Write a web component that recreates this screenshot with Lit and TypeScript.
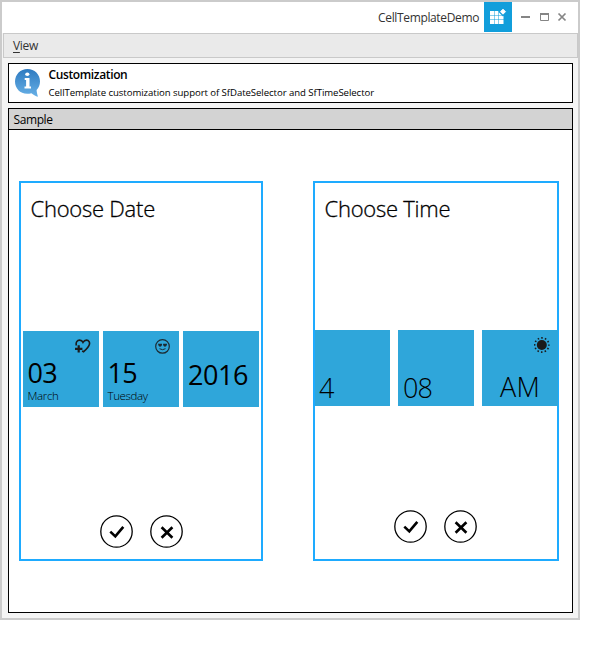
import { LitElement, html, css, svg, nothing } from "lit";
import { customElement, property } from "lit/decorators.js";

const heart = svg`
  <path d="M1.4 7.5C.5 4.5 2.2 2.100 4.6 2.100 6.300 2.100 7.400 3 8 4.300 8.800 2.900 9.900 2.100 11.500 2.100c2.400 0 3.600 2.300 2.800 4.600-.9 2.700-3.300 4.800-5.700 7l-1.500-.6" fill="none" stroke="#1b1b1b" stroke-width="1.6"/>
  <path d="M3.7 7.3v7.2M0 10.900h7.400" stroke="#1b1b1b" stroke-width="2.2"/>`;

const face = svg`
  <circle cx="7.5" cy="8.4" r="6.8" fill="none" stroke="#1c2b33" stroke-width="1.2"/>
  <path d="M3 5.800h4v1.100q-.5 1.800-1.900 1.800T3.300 6.900zM8.100 5.800h4l-.3 1.100q-.4 1.800-1.800 1.800T8.100 6.900z" fill="#1c2b33"/>
  <path d="M4.500 10.700q3 2 6 0" fill="none" stroke="#1c2b33" stroke-width="1"/>`;

const sun = svg`
  <circle cx="7.8" cy="8" r="5" fill="#1b1b1b"/>
  <circle cx="7.8" cy="8" r="7.1" fill="none" stroke="#1b1b1b" stroke-width="1.6" stroke-dasharray="1.6 2.117" stroke-dashoffset=".8"/>`;

const glyphs: Record<string, unknown> = { heart, face, sun };

interface Cell {
  value: string;
  label?: string;
  glyph?: string;
  kind: string;
}

@customElement("selector-panel")
class SelectorPanel extends LitElement {
  @property() heading = "";
  @property() variant = "date";
  @property({ attribute: false }) cells: Cell[] = [];

  static styles = css`
    :host { display: block; }
    .panel { box-sizing: border-box; height: 380px; border: 2px solid #1eabff; display: flex; flex-direction: column; }
    .date { width: 244px; }
    .time { width: 246px; }
    .heading { height: 148px; box-sizing: border-box; padding: 10px 0 0 9.5px; font: 300 22px/30px "Open Sans", "Noto Sans", sans-serif; letter-spacing: -.24px; color: #000; white-space: nowrap; -webkit-text-stroke: .3px #000; }
    .time .heading { height: 147px; }
    .cells { display: flex; gap: 4px; padding: 0 2px; height: 76px; }
    .time .cells { gap: 8px; padding: 0; }
    .cell { position: relative; box-sizing: border-box; flex: none; width: 76px; height: 76px; background: #2fa6da; white-space: nowrap; display: flex; flex-direction: column; }
    .time .cell:first-child { width: 75px; }
    .glyph { position: absolute; top: 7px; right: 8px; width: 16px; height: 16px; }
    .value { font: 400 27px/30px "Open Sans", "Noto Sans", sans-serif; color: #000; }
    .day .value { padding: 32px 0 0 4.5px; line-height: 20px; letter-spacing: -.6px; }
    .label { font: 300 11.5px/12px "Open Sans", "Noto Sans", sans-serif; padding: 7px 0 0 4.5px; color: #000; letter-spacing: -.35px; }
    .year .value { padding: 29px 0 0 5px; letter-spacing: -.4px; }
    .clock .value { padding: 43px 0 0 4px; font-weight: 300; letter-spacing: -1px; }
    .clock + .clock .value { padding-left: 5px; }
    .meridiem .value { padding: 42px 0 0 18px; font-weight: 300; letter-spacing: .3px; }
    .actions { display: flex; gap: 17px; padding: 108px 0 0 79px; }
    .time .actions { padding-top: 104px; }
    .actions svg { width: 33px; height: 33px; }
  `;

  render() {
    return html`
      <div class="panel ${this.variant}">
        <div class="heading">${this.heading}</div>
        <div class="cells">
          ${this.cells.map((c) => html`
            <div class="cell ${c.kind}">
              ${c.glyph ? html`<svg class="glyph" viewBox="0 0 16 16">${glyphs[c.glyph]}</svg>` : nothing}
              <div class="value">${c.value}</div>
              ${c.label ? html`<div class="label">${c.label}</div>` : nothing}
            </div>`)}
        </div>
        <div class="actions">
          <svg viewBox="0 0 33 33" fill="none" stroke="#000">
            <circle cx="16.5" cy="16.5" r="15.7" stroke-width="1.3" />
            <path d="M10.300 16.600l5 4.800 8-9.600" stroke-width="2.6" />
          </svg>
          <svg viewBox="0 0 33 33" fill="none" stroke="#000">
            <circle cx="16.5" cy="16.5" r="15.7" stroke-width="1.3" />
            <path d="M11.600 12.200l10.800 10.600M22.400 12.200l-10.800 10.600" stroke-width="2.6" />
          </svg>
        </div>
      </div>`;
  }
}

@customElement("app-root")
class AppRoot extends LitElement {
  static styles = css`
    :host { display: block; width: 591px; height: 650px; background: #fff; font-family: "Open Sans", "Noto Sans", sans-serif; color: #000; overflow: hidden; }
    .window { box-sizing: border-box; width: 580px; height: 620px; border: 2px solid #cbcbcb; background: #f4f4f4; display: flex; flex-direction: column; }
    .title { height: 31px; background: #fff; display: flex; justify-content: flex-end; white-space: nowrap; }
    .name { font-size: 12px; line-height: 32px; color: #333; letter-spacing: -.36px; margin-right: 5px; }
    .logo { width: 28px; height: 30px; background: #119edb; }
    .controls { width: 66px; height: 30px; }
    .menu { box-sizing: border-box; height: 25px; margin: 0 0 0 1px; border: 1px solid #c9c9c9; background: #eaeaea; padding-left: 9px; font-size: 12px; line-height: 24px; color: #333; letter-spacing: -.3px; }
    .key { text-decoration: underline; text-underline-offset: 2px; }
    .info { box-sizing: border-box; height: 40px; margin: 5px 5px 0 6px; border: 1px solid #000; background: #fff; display: flex; }
    .bubble { width: 30px; height: 36px; margin-left: 4px; flex: none; }
    .copy { padding: 2px 0 0 5.5px; white-space: nowrap; }
    .strong { font-size: 12px; line-height: 17px; font-weight: 600; letter-spacing: -.37px; }
    .detail { font-size: 9.6px; line-height: 14px; padding-top: 3px; letter-spacing: -.06px; }
    .sample { box-sizing: border-box; height: 505px; margin: 5px 5px 0 6px; border: 1px solid #000; background: #fff; }
    .caption { height: 20px; background: #d3d3d3; border-bottom: 1px solid #000; padding-left: 4.5px; font-size: 12px; line-height: 21px; letter-spacing: -.4px; }
    .panels { display: flex; gap: 50px; padding: 51px 0 0 10px; }
  `;

  private dateCells: Cell[] = [
    { value: "03", label: "March", glyph: "heart", kind: "day" },
    { value: "15", label: "Tuesday", glyph: "face", kind: "day" },
    { value: "2016", kind: "year" },
  ];

  private timeCells: Cell[] = [
    { value: "4", kind: "clock" },
    { value: "08", kind: "clock" },
    { value: "AM", glyph: "sun", kind: "meridiem" },
  ];

  render() {
    return html`
      <div class="window">
        <div class="title">
          <span class="name">CellTemplateDemo</span>
          <svg class="logo" viewBox="0 0 28 30">
            <path d="M6 9h4v4H6zM10.500 9h4v4h-4zM15 9h4.500v4H15zM6 13.500h4v4H6zM10.500 13.500h4v4h-4zM15 13.500h4.500v4H15zM6 18h4v4H6zM10.500 18h4v4h-4zM15 18h4.500v4H15z" fill="#fff" />
            <path d="M19 5l4.700 4.700-4.700 4.700-4.700-4.700z" fill="#119edb" />
            <path d="M19 7.200l2.500 2.500-2.500 2.500-2.500-2.500z" fill="#fff" stroke="#fff" stroke-linejoin="round" />
          </svg>
          <svg class="controls" viewBox="0 0 66 30" fill="none" stroke="#858585">
            <path d="M9 15h9" stroke-width="2" />
            <path d="M28.500 12h8v6.500h-8z" /><path d="M28 12h9" stroke-width="2" />
            <path d="M46.500 11.500l7 7M53.500 11.500l-7 7" stroke-width="1.7" />
          </svg>
        </div>
        <div class="menu"><span class="key">V</span>iew</div>
        <div class="info">
          <svg class="bubble" viewBox="0 0 30 36">
            <defs>
              <linearGradient id="blue" x2="0" y2="1">
                <stop offset="0" stop-color="#2e7ac0" /><stop offset="1" stop-color="#67b0e6" />
              </linearGradient>
            </defs>
            <path d="M14.500 5C21.500 5 27 10.300 27 17.500c0 3.400-1.300 6.300-3.400 8.400.1 1.800.5 4 1.400 6.800-2.500-.6-4.900-2-6.600-3.500C9 31.800 2 25.500 2 17.500 2 10.300 7.500 5 14.500 5z" fill="url(#blue)" />
            <ellipse cx="14.3" cy="10.3" rx="2.1" ry="1.8" fill="#fff" />
            <path d="M11.700 14h4.800v8.400H18v2h-6.500v-2h1.600V16h-1.400z" fill="#fff" />
          </svg>
          <div class="copy">
            <div class="strong">Customization</div>
            <div class="detail">CellTemplate customization support of SfDateSelector and SfTimeSelector</div>
          </div>
        </div>
        <div class="sample">
          <div class="caption">Sample</div>
          <div class="panels">
            <selector-panel heading="Choose Date" variant="date" .cells=${this.dateCells}></selector-panel>
            <selector-panel heading="Choose Time" variant="time" .cells=${this.timeCells}></selector-panel>
          </div>
        </div>
      </div>`;
  }
}
